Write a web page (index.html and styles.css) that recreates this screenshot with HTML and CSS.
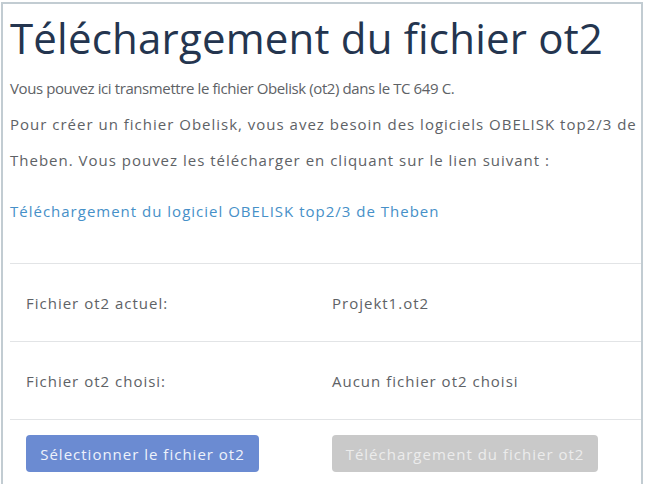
FILE: index.html
```html
<!DOCTYPE html>
<html lang="fr">
<head>
<meta charset="utf-8">
<title>Téléchargement du fichier ot2</title>
<link rel="stylesheet" href="styles.css">
</head>
<body>
<div class="panel">
  <h1 class="title">Téléchargement du fichier ot2</h1>
  <p class="text text-tight">Vous pouvez ici transmettre le fichier Obelisk (ot2) dans le TC 649 C.</p>
  <p class="text">Pour créer un fichier Obelisk, vous avez besoin des logiciels OBELISK top2/3 de Theben. Vous pouvez les télécharger en cliquant sur le lien suivant :</p>
  <p class="text link-line"><a class="link" href="#">Téléchargement du logiciel OBELISK top2/3 de Theben</a></p>
  <div class="rows">
    <div class="row">
      <span class="label">Fichier ot2 actuel:</span>
      <span class="value">Projekt1.ot2</span>
    </div>
    <div class="row">
      <span class="label">Fichier ot2 choisi:</span>
      <span class="value">Aucun fichier ot2 choisi</span>
    </div>
    <div class="row actions">
      <span class="label"><button class="btn btn-primary" type="button">Sélectionner le fichier ot2</button></span>
      <span class="value"><button class="btn btn-disabled" type="button" disabled>Téléchargement du fichier ot2</button></span>
    </div>
  </div>
</div>
</body>
</html>
```

FILE: styles.css
```css
html, body {
  margin: 0;
  padding: 0;
  background: #ffffff;
}

body {
  width: 645px;
  height: 484px;
  overflow: hidden;
  font-family: "Open Sans", "DejaVu Sans", sans-serif;
  color: #5e6266;
}

.panel {
  margin: 2px 0 0 1px;
  width: 631px;
  height: 480px;
  border: 2px solid #c2ccd2;
  border-bottom: none;
  padding-left: 7px;
  overflow: hidden;
}

.title {
  margin: 10px 0 8px 0;
  font-size: 42px;
  line-height: 48px;
  font-weight: 400;
  letter-spacing: 0.2px;
  color: #24354f;
}

.text {
  margin: 0;
  font-size: 15px;
  line-height: 36px;
  letter-spacing: 1px;
}

.text-tight {
  letter-spacing: -0.4px;
}

.link-line {
  margin-top: 15px;
  margin-bottom: 34px;
}

.link {
  color: #4690c8;
  text-decoration: none;
}

.row {
  display: flex;
  align-items: center;
  height: 77px;
  border-top: 1px solid #e2e4e6;
  font-size: 15px;
  letter-spacing: 1px;
}

.label {
  width: 306px;
  padding-left: 16px;
}

.actions {
  align-items: flex-start;
  padding-top: 15px;
}

.btn {
  font-family: inherit;
  font-size: 15px;
  letter-spacing: 1px;
  height: 37px;
  border: none;
  border-radius: 4px;
  color: #eef2fb;
  padding: 0 10px;
}

.btn-primary {
  background: #6b8bd2;
  width: 233px;
}

.btn-disabled {
  background: #c9c9c9;
  color: #ececec;
  width: 266px;
}
```
